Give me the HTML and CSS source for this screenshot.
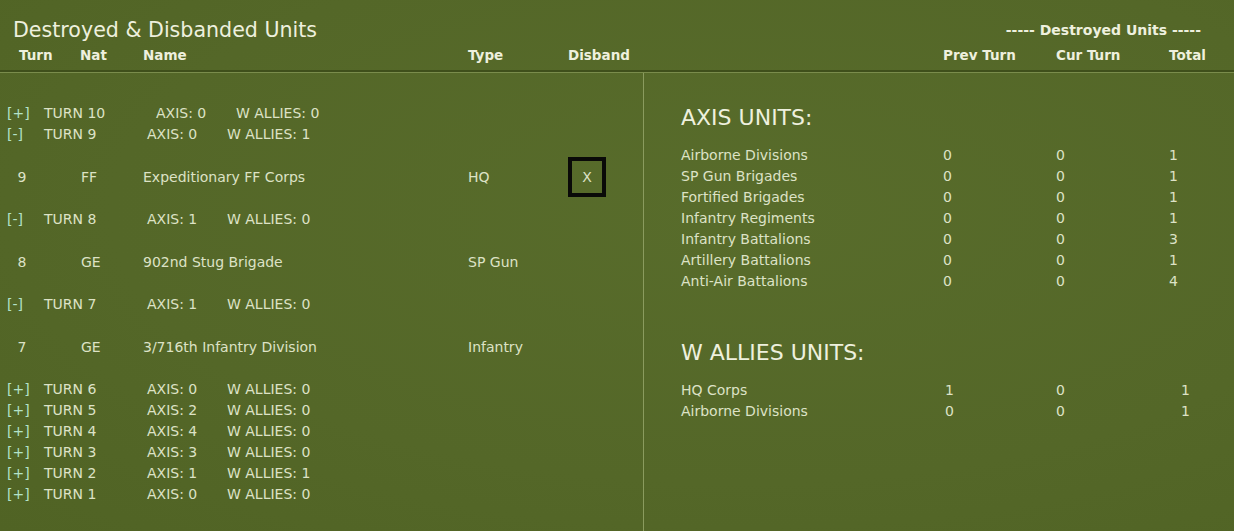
FILE: index.html
```html
<!DOCTYPE html>
<html>
<head>
<meta charset="utf-8">
<link rel="stylesheet" href="styles.css">
</head>
<body>
<div class="app">
  <header class="head">
    <div class="head-top">
      <h1 class="title">Destroyed &amp; Disbanded Units</h1>
      <div class="group-label">----- Destroyed Units -----</div>
    </div>
    <div class="cols">
      <span class="c-turn">Turn</span>
      <span class="c-nat">Nat</span>
      <span class="c-name">Name</span>
      <span class="c-type">Type</span>
      <span class="c-disband">Disband</span>
      <span class="c-prev">Prev Turn</span>
      <span class="c-cur">Cur Turn</span>
      <span class="c-total">Total</span>
    </div>
  </header>
  <main class="body">
    <section class="left">
      <div class="turn"><span class="tog">[+]</span><span class="tname">TURN 10</span><span class="axis wide">AXIS: 0</span><span class="allies">W ALLIES: 0</span></div>
      <div class="turn"><span class="tog">[-]</span><span class="tname">TURN 9</span><span class="axis">AXIS: 0</span><span class="allies">W ALLIES: 1</span></div>
      <div class="unit"><span class="u-turn">9</span><span class="u-nat">FF</span><span class="u-name">Expeditionary FF Corps</span><span class="u-type">HQ</span><span class="u-disband"><span class="xbox">X</span></span></div>
      <div class="turn"><span class="tog">[-]</span><span class="tname">TURN 8</span><span class="axis">AXIS: 1</span><span class="allies">W ALLIES: 0</span></div>
      <div class="unit"><span class="u-turn">8</span><span class="u-nat">GE</span><span class="u-name">902nd Stug Brigade</span><span class="u-type">SP Gun</span><span class="u-disband"></span></div>
      <div class="turn"><span class="tog">[-]</span><span class="tname">TURN 7</span><span class="axis">AXIS: 1</span><span class="allies">W ALLIES: 0</span></div>
      <div class="unit"><span class="u-turn">7</span><span class="u-nat">GE</span><span class="u-name">3/716th Infantry Division</span><span class="u-type">Infantry</span><span class="u-disband"></span></div>
      <div class="turn"><span class="tog">[+]</span><span class="tname">TURN 6</span><span class="axis">AXIS: 0</span><span class="allies">W ALLIES: 0</span></div>
      <div class="turn"><span class="tog">[+]</span><span class="tname">TURN 5</span><span class="axis">AXIS: 2</span><span class="allies">W ALLIES: 0</span></div>
      <div class="turn"><span class="tog">[+]</span><span class="tname">TURN 4</span><span class="axis">AXIS: 4</span><span class="allies">W ALLIES: 0</span></div>
      <div class="turn"><span class="tog">[+]</span><span class="tname">TURN 3</span><span class="axis">AXIS: 3</span><span class="allies">W ALLIES: 0</span></div>
      <div class="turn"><span class="tog">[+]</span><span class="tname">TURN 2</span><span class="axis">AXIS: 1</span><span class="allies">W ALLIES: 1</span></div>
      <div class="turn"><span class="tog">[+]</span><span class="tname">TURN 1</span><span class="axis">AXIS: 0</span><span class="allies">W ALLIES: 0</span></div>
    </section>
    <section class="right">
      <h2 class="side axis-side">AXIS UNITS:</h2>
      <div class="items">
        <div class="item"><span class="i-name">Airborne Divisions</span><span class="i-prev">0</span><span class="i-cur">0</span><span class="i-total">1</span></div>
        <div class="item"><span class="i-name">SP Gun Brigades</span><span class="i-prev">0</span><span class="i-cur">0</span><span class="i-total">1</span></div>
        <div class="item"><span class="i-name">Fortified Brigades</span><span class="i-prev">0</span><span class="i-cur">0</span><span class="i-total">1</span></div>
        <div class="item"><span class="i-name">Infantry Regiments</span><span class="i-prev">0</span><span class="i-cur">0</span><span class="i-total">1</span></div>
        <div class="item"><span class="i-name">Infantry Battalions</span><span class="i-prev">0</span><span class="i-cur">0</span><span class="i-total">3</span></div>
        <div class="item"><span class="i-name">Artillery Battalions</span><span class="i-prev">0</span><span class="i-cur">0</span><span class="i-total">1</span></div>
        <div class="item"><span class="i-name">Anti-Air Battalions</span><span class="i-prev">0</span><span class="i-cur">0</span><span class="i-total">4</span></div>
      </div>
      <h2 class="side allies-side">W ALLIES UNITS:</h2>
      <div class="items allies-items">
        <div class="item"><span class="i-name">HQ Corps</span><span class="i-prev">1</span><span class="i-cur">0</span><span class="i-total">1</span></div>
        <div class="item"><span class="i-name">Airborne Divisions</span><span class="i-prev">0</span><span class="i-cur">0</span><span class="i-total">1</span></div>
      </div>
    </section>
  </main>
</div>
</body>
</html>
```
FILE: styles.css
```css
* { box-sizing: border-box; }
html, body { margin: 0; padding: 0; }
body {
  background: #55682a;
  font-family: "DejaVu Sans", Verdana, sans-serif;
  color: #dde2c6;
}
.app {
  width: 1234px;
  height: 531px;
  overflow: hidden;
  background: radial-gradient(ellipse at 60% 40%, #586c2b 0%, #546728 60%, #506324 100%);
  display: flex;
  flex-direction: column;
}
.head {
  height: 73px;
  border-bottom: 1px solid #7a8c4c;
  box-shadow: inset 0 -2px 0 #3f4f1b;
  flex: none;
}
.head-top {
  display: flex;
  justify-content: space-between;
  align-items: center;
  height: 26px;
  margin-top: 17px;
}
.title {
  margin: 0;
  padding-left: 13px;
  font-size: 20.6px;
  font-weight: normal;
  line-height: 26px;
  color: #eef0de;
}
.group-label {
  padding-right: 33px;
  font-size: 14px;
  font-weight: bold;
  color: #eef0de;
}
.cols {
  display: flex;
  height: 18px;
  margin-top: 3px;
  align-items: center;
  padding-left: 19px;
  font-size: 13.5px;
  font-weight: bold;
  color: #eef0de;
  line-height: 18px;
}
.c-turn { width: 61px; }
.c-nat { width: 63px; }
.c-name { width: 325px; }
.c-type { width: 100px; }
.c-disband { width: 375px; }
.c-prev { width: 113px; }
.c-cur { width: 113px; }

.body {
  flex: 1;
  display: flex;
  min-height: 0;
}
.left {
  width: 644px;
  border-right: 1px solid #8a9b5e;
  padding-top: 30px;
  font-size: 14px;
  flex: none;
}
.turn {
  display: flex;
  height: 21px;
  align-items: center;
  line-height: 21px;
  padding-left: 7px;
}
.tog { width: 37px; color: #b3e2c8; }
.tname { width: 103px; }
.axis { width: 80px; }
.axis.wide { margin-left: 9px; }
.unit {
  display: flex;
  height: 64px;
  align-items: center;
}
.u-turn { width: 44px; text-align: center; }
.u-nat { width: 99px; padding-left: 37px; }
.u-name { width: 325px; }
.u-type { width: 100px; }
.u-disband { width: 40px; display: flex; }
.xbox {
  width: 38px;
  height: 40px;
  border: 4px solid #0a0a08;
  display: flex;
  align-items: center;
  justify-content: center;
  font-size: 14px;
}

.right {
  flex: 1;
  padding-left: 37px;
  font-size: 14px;
}
.side {
  margin: 0;
  font-size: 22px;
  font-weight: normal;
  line-height: 28px;
  color: #eef0de;
}
.axis-side { margin-top: 31px; }
.allies-side { margin-top: 47px; }
.items { margin-top: 13px; }
.item {
  display: flex;
  height: 21px;
  line-height: 21px;
  align-items: center;
}
.i-name { width: 262px; }
.i-prev { width: 113px; }
.i-cur { width: 113px; }
.allies-items .i-prev { padding-left: 2px; }
.allies-items .i-total { padding-left: 12px; }
```
